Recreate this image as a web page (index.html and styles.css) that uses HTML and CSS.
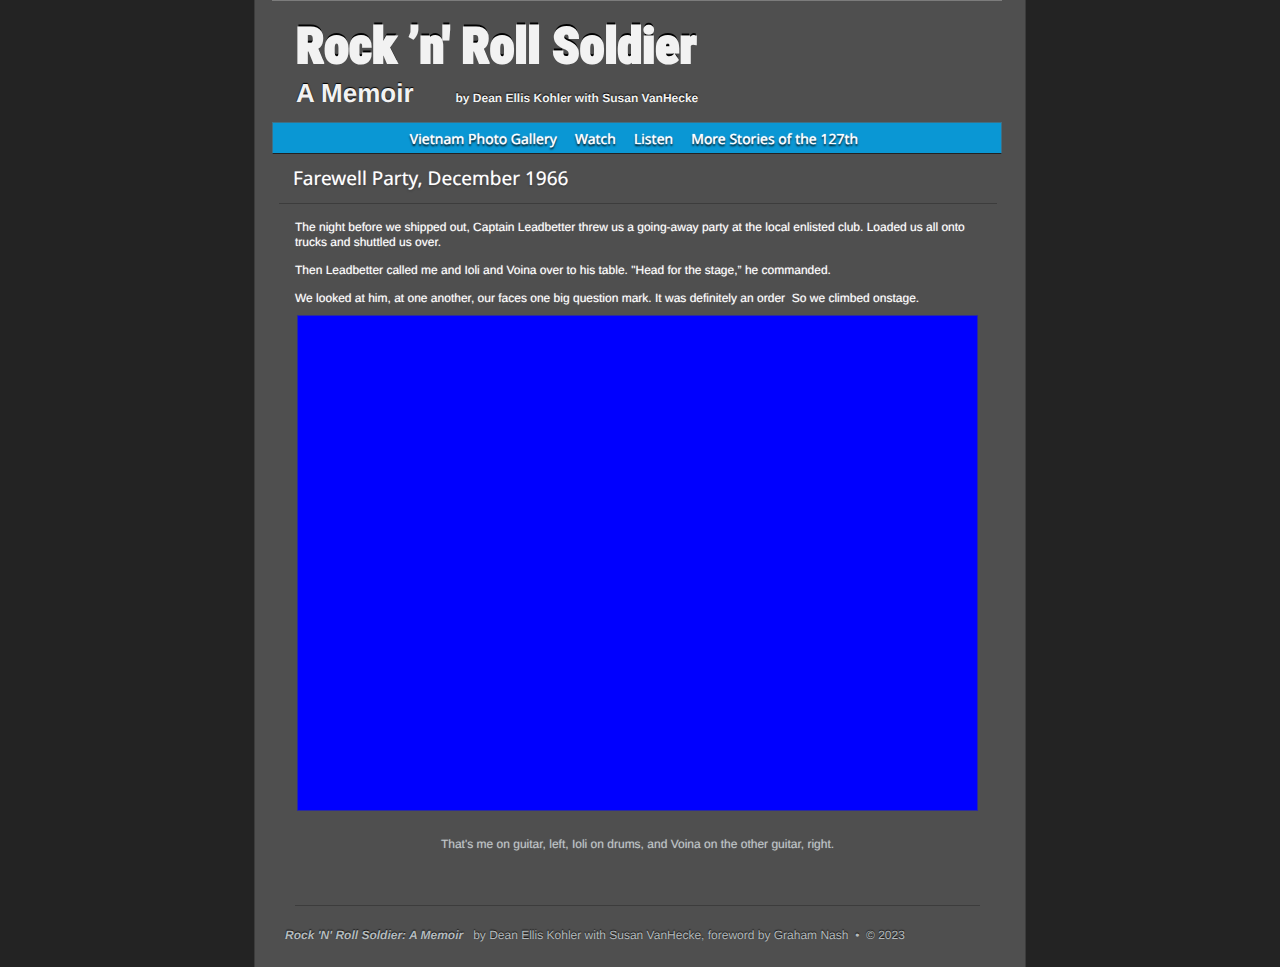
FILE: index.html
```html
<!DOCTYPE html>
<html lang="en">
<head>
<meta charset="utf-8">
<meta name="viewport" content="width=device-width, initial-scale=1">
<title>Rock 'n' Roll Soldier: A Memoir</title>
<link rel="stylesheet" href="styles.css">
</head>
<body>
<div class="page">
  <header class="masthead">
    <h1 class="title">Rock ’n' Roll Soldier</h1>
    <div class="byline">
      <span class="subtitle">A Memoir</span>
      <span class="authors">by Dean Ellis Kohler with Susan VanHecke</span>
    </div>
  </header>
  <nav class="nav">
    <a href="#gallery">Vietnam Photo Gallery</a>
    <a href="#watch">Watch</a>
    <a href="#listen">Listen</a>
    <a href="#stories">More Stories of the 127th</a>
  </nav>
  <main>
    <h2 class="heading">Farewell Party, December 1966</h2>
    <div class="story">
      <div class="text">
        <p>The night before we shipped out, Captain Leadbetter threw us a going-away party at the local enlisted club. Loaded us all onto trucks and shuttled us over.</p>
        <p>Then Leadbetter called me and Ioli and Voina over to his table. "Head for the stage,” he commanded.</p>
        <p>We looked at him, at one another, our faces one big question mark. It was definitely an order&nbsp; So we climbed onstage.</p>
      </div>
      <figure class="photo">
        <div class="picture"></div>
        <figcaption>That's me on guitar, left, Ioli on drums, and Voina on the other guitar, right.</figcaption>
      </figure>
    </div>
  </main>
  <footer class="footer">
    <b>Rock 'N' Roll Soldier: A Memoir</b> &nbsp; by Dean Ellis Kohler with Susan VanHecke, foreword by Graham Nash &nbsp;•&nbsp; © 2023
  </footer>
</div>
</body>
</html>
```
FILE: styles.css
```css
* { box-sizing: border-box; }
body {
  margin: 0;
  background: #232323;
  color: #fff;
  font: 12px/15px "Liberation Sans", Arial, sans-serif;
  text-rendering: geometricPrecision;
}
.page {
  max-width: 772px;
  min-height: 100vh;
  margin: 0 auto;
  padding: 0 23px 0 17px;
  background: #4f4f4f;
  border: 1px solid #3c3c3c;
  border-width: 0 1px;
}
.masthead {
  border-top: 1px solid #7c7c7c;
  padding: 16px 24px 12px;
  color: #f2f2f2;
  text-shadow: 0 -1px 1px #000;
}
.title {
  margin: 0;
  font: 900 50px/60px Impact, "Roboto Condensed", "Open Sans Condensed", Roboto, sans-serif;
  -webkit-text-stroke: 2px #f2f2f2;
  text-shadow: 0 -3px 0 #000;
  white-space: nowrap;
}
.byline {
  display: flex;
  align-items: baseline;
  gap: 42px;
  font-weight: bold;
}
.subtitle { font-size: 26px; line-height: 33px; }
.authors { font-size: 12px; }
.nav {
  display: flex;
  flex-wrap: wrap;
  justify-content: center;
  gap: 0 18px;
  padding: 6px 6px 3px 0;
  background: #0a97d4;
  border: 1px solid #3f6f84;
  border-bottom-color: #222;
  font: 14px/21px "Noto Sans", "Open Sans", sans-serif;
}
.nav a {
  color: #fff;
  text-decoration: none;
  text-shadow: 0 0 1px #fff, 0 2px 2px #000;
}
.heading {
  margin: 0 5px 0 7px;
  padding: 10px 14px 11px;
  border-bottom: 1px solid #3c3c3c;
  font: 400 19px/28px "Noto Sans", "Open Sans", sans-serif;
  text-shadow: 0 0 1px #aaa, 0 1px 2px #333;
}
.story {
  margin: 0 22px 0 23px;
  padding: 16px 0 53px;
  border-bottom: 1px solid #3c3c3c;
  text-shadow: 0 0 1px #aaa;
}
.text {
  display: grid;
  gap: 13px;
  padding-bottom: 9px;
}
.text p { margin: 0; }
.photo { margin: 0 2px; }
.picture {
  aspect-ratio: 681 / 496;
  background: #00f;
  border: 1px solid #2b2b9e;
}
.photo figcaption {
  margin-top: 26px;
  text-align: center;
  color: #bfc5c8;
  text-shadow: 0 0 1px #888;
}
.footer {
  padding: 22px 13px 24px;
  color: #b4babd;
  text-shadow: 0 -1px 1px #111;
}
.footer b { font-style: italic; }
```
